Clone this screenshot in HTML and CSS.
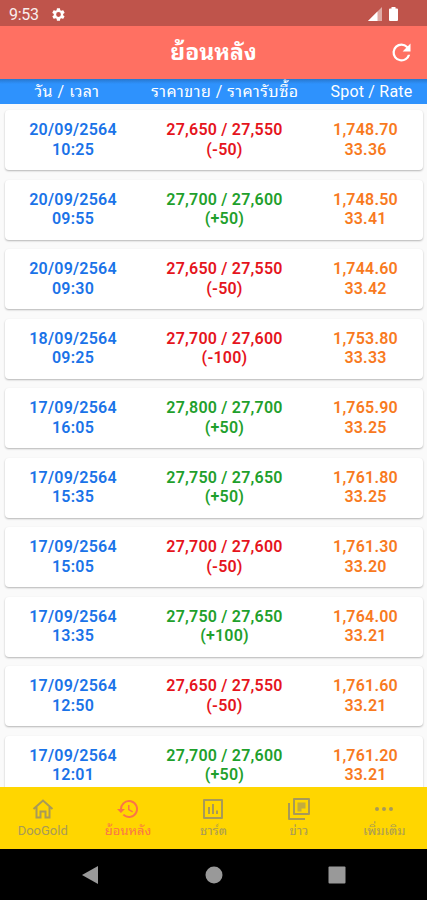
FILE: index.html
```html
<!DOCTYPE html>
<html lang="th">
<head>
    <meta charset="UTF-8">
    <meta name="viewport" content="width=device-width, initial-scale=1.0">
    <title>ย้อนหลัง</title>
    <link rel="stylesheet" href="styles.css">
</head>
<body>
    <div class="status-bar">
        <span class="clock">9:53</span>
        <svg class="gear" viewBox="0 0 24 24"><path fill-rule="evenodd" d="M19.4 13a7.500 7.500 0 0 0 0-2l2.100-1.600a.5.5 0 0 0 .1-.7l-2-3.400a.5.5 0 0 0-.6-.2l-2.500 1a7.300 7.300 0 0 0-1.700-1l-.4-2.700a.5.5 0 0 0-.5-.4h-4a.5.5 0 0 0-.5.4L9 5.100a7.300 7.300 0 0 0-1.700 1l-2.500-1a.5.5 0 0 0-.6.2l-2 3.400a.5.5 0 0 0 .1.7L4.500 11a7.500 7.500 0 0 0 0 2l-2.200 1.600a.5.5 0 0 0-.1.700l2 3.400c.1.2.4.3.6.2l2.500-1c.5.4 1.100.7 1.700 1l.4 2.700c0 .2.2.4.5.4h4c.3 0 .5-.2.5-.4l.4-2.700a7.300 7.300 0 0 0 1.700-1l2.500 1c.2.1.5 0 .6-.2l2-3.400a.5.5 0 0 0-.1-.7zM12 8.200a3.800 3.800 0 1 1 0 7.600 3.800 3.800 0 0 1 0-7.600z"/></svg>
        <svg class="signal" viewBox="0 0 14 14"><path d="M0 14L14 0v14z" opacity=".5"/><path d="M0 14L9.500 4.500V14z"/></svg>
        <svg class="battery" viewBox="0 0 9 14"><path d="M2.500 0h4v1.500H8a1 1 0 0 1 1 1V13a1 1 0 0 1-1 1H1a1 1 0 0 1-1-1V2.500a1 1 0 0 1 1-1h1.500z"/></svg>
    </div>

    <header class="app-bar">
        <h1>ย้อนหลัง</h1>
        <svg class="refresh" viewBox="0 0 24 24"><path d="M17.650 6.350A7.958 7.958 0 0 0 12 4a8 8 0 1 0 7.730 10h-2.080A6 6 0 1 1 12 6c1.660 0 3.140.69 4.220 1.780L13 11h7V4z"/></svg>
    </header>

    <div class="table-head">
        <span>วัน / เวลา</span>
        <span>ราคาขาย / ราคารับซื้อ</span>
        <span class="latin">Spot / Rate</span>
    </div>

    <main class="list">
        <div class="card">
            <div class="date">20/09/2564<br>10:25</div>
            <div class="price down">27,650 / 27,550<br>(-50)</div>
            <div class="spot">1,748.70<br>33.36</div>
        </div>
        <div class="card">
            <div class="date">20/09/2564<br>09:55</div>
            <div class="price up">27,700 / 27,600<br>(+50)</div>
            <div class="spot">1,748.50<br>33.41</div>
        </div>
        <div class="card">
            <div class="date">20/09/2564<br>09:30</div>
            <div class="price down">27,650 / 27,550<br>(-50)</div>
            <div class="spot">1,744.60<br>33.42</div>
        </div>
        <div class="card">
            <div class="date">18/09/2564<br>09:25</div>
            <div class="price down">27,700 / 27,600<br>(-100)</div>
            <div class="spot">1,753.80<br>33.33</div>
        </div>
        <div class="card">
            <div class="date">17/09/2564<br>16:05</div>
            <div class="price up">27,800 / 27,700<br>(+50)</div>
            <div class="spot">1,765.90<br>33.25</div>
        </div>
        <div class="card">
            <div class="date">17/09/2564<br>15:35</div>
            <div class="price up">27,750 / 27,650<br>(+50)</div>
            <div class="spot">1,761.80<br>33.25</div>
        </div>
        <div class="card">
            <div class="date">17/09/2564<br>15:05</div>
            <div class="price down">27,700 / 27,600<br>(-50)</div>
            <div class="spot">1,761.30<br>33.20</div>
        </div>
        <div class="card">
            <div class="date">17/09/2564<br>13:35</div>
            <div class="price up">27,750 / 27,650<br>(+100)</div>
            <div class="spot">1,764.00<br>33.21</div>
        </div>
        <div class="card">
            <div class="date">17/09/2564<br>12:50</div>
            <div class="price down">27,650 / 27,550<br>(-50)</div>
            <div class="spot">1,761.60<br>33.21</div>
        </div>
        <div class="card">
            <div class="date">17/09/2564<br>12:01</div>
            <div class="price up">27,700 / 27,600<br>(+50)</div>
            <div class="spot">1,761.20<br>33.21</div>
        </div>
    </main>

    <nav class="tabs">
        <a class="tab">
            <svg viewBox="0 0 24 24"><path d="M2.500 12L12 3.500l9.500 8.500M5.500 10v10.500h4v-6h5v6h4V10" fill="none" stroke="currentColor" stroke-width="2"/></svg>
            <span>DooGold</span>
        </a>
        <a class="tab active">
            <svg viewBox="0 0 24 24"><path d="M13 3a9 9 0 0 0-9 9H1l3.890 3.890.07.14L9 12H6a7 7 0 1 1 2.060 4.940l-1.420 1.420A9 9 0 1 0 13 3zm-1 5v5l4.280 2.540.72-1.210-3.500-2.080V8z"/></svg>
            <span>ย้อนหลัง</span>
        </a>
        <a class="tab">
            <svg viewBox="0 0 24 24"><path d="M3 3h18v18H3zM8 10v7M12 7v10M16 13.500V17" fill="none" stroke="currentColor" stroke-width="2" stroke-linejoin="round"/></svg>
            <span>ชาร์ต</span>
        </a>
        <a class="tab">
            <svg viewBox="0 0 24 24"><path d="M7 2h15v15H7zM2 6v16h16" fill="none" stroke="currentColor" stroke-width="2" stroke-linejoin="round"/><path d="M10.500 5.500h8v6h-4v3h-4z" opacity=".7"/></svg>
            <span>ข่าว</span>
        </a>
        <a class="tab">
            <svg viewBox="0 0 24 24"><circle cx="5" cy="12" r="2"/><circle cx="12" cy="12" r="2"/><circle cx="19" cy="12" r="2"/></svg>
            <span>เพิ่มเติม</span>
        </a>
    </nav>

    <div class="system-nav">
        <svg viewBox="0 0 18 18"><path d="M0 9L16 0v18z"/></svg>
        <svg viewBox="0 0 18 18"><circle cx="9" cy="9" r="8.500"/></svg>
        <svg viewBox="0 0 18 18"><rect x=".5" y=".5" width="17" height="17" rx="1"/></svg>
    </div>
</body>
</html>
```
FILE: styles.css
```css
* {
    box-sizing: border-box;
}
body {
    margin: 0;
    height: 900px;
    display: flex;
    flex-direction: column;
    overflow: hidden;
    background: #fafafa;
    font-family: Roboto, "Noto Sans Thai Looped", Loma, Waree, Garuda, "Noto Sans Thai", sans-serif;
}
svg {
    display: block;
    fill: currentColor;
}
.status-bar {
    flex: 0 0 26px;
    display: flex;
    align-items: center;
    padding: 2px 29px 0 9px;
    background: #bf544b;
    color: #fff;
}
.clock {
    font-size: 16px;
    letter-spacing: -0.3px;
    opacity: 0.9;
}
.gear {
    width: 15px;
    height: 15px;
    margin-left: 12px;
}
.signal {
    width: 14px;
    height: 14px;
    margin-left: auto;
}
.battery {
    width: 9px;
    height: 14px;
    margin-left: 7px;
}
.app-bar {
    flex: 0 0 53px;
    display: grid;
    grid-template-columns: 52px 1fr 52px;
    align-items: center;
    background: #ff7062;
    color: #fff;
}
.app-bar h1 {
    grid-column: 2;
    margin: 0;
    text-align: center;
    font-size: 23px;
    line-height: 30px;
}
.refresh {
    width: 27px;
    height: 27px;
    margin-left: 13px;
}
.table-head {
    flex: 0 0 25px;
    display: grid;
    grid-template-columns: 134px 182px 111px;
    align-items: center;
    background: linear-gradient(#2878cf, #2e92fd 5px);
    color: #fff;
    font-size: 16px;
    letter-spacing: 0.5px;
    line-height: 25px;
    text-align: center;
    white-space: nowrap;
}
.table-head .latin {
    letter-spacing: 0.2px;
}
.list {
    flex: 1;
    min-height: 0;
    overflow: hidden;
    padding: 6px 4px 0 5px;
}
.card {
    display: grid;
    grid-template-columns: 136px 167px 115px;
    height: 60px;
    margin-bottom: 9.500px;
    padding-top: 10px;
    background: #fff;
    border-radius: 4px;
    box-shadow: 0 1px 2px rgba(0, 0, 0, 0.28);
    font-size: 16px;
    font-weight: 600;
    letter-spacing: 0.22px;
    line-height: 19.500px;
    text-align: center;
    white-space: nowrap;
}
.date {
    color: #1a73e8;
}
.up {
    color: #1fa02c;
}
.down {
    color: #e5141c;
}
.spot {
    color: #f87a1e;
}
.tabs {
    flex: 0 0 62px;
    display: grid;
    grid-template-columns: repeat(5, 1fr);
    background: #ffd600;
    color: #a89a58;
}
.tab {
    display: flex;
    flex-direction: column;
    align-items: center;
    padding-top: 10px;
    font-size: 13px;
    line-height: 20px;
}
.tab svg {
    width: 24px;
    height: 24px;
}
.tab.active {
    color: #fb7448;
}
.system-nav {
    flex: 0 0 51px;
    display: flex;
    justify-content: center;
    align-items: center;
    gap: 105px;
    background: #000;
    color: #999;
}
.system-nav svg {
    width: 18px;
    height: 18px;
}
```
